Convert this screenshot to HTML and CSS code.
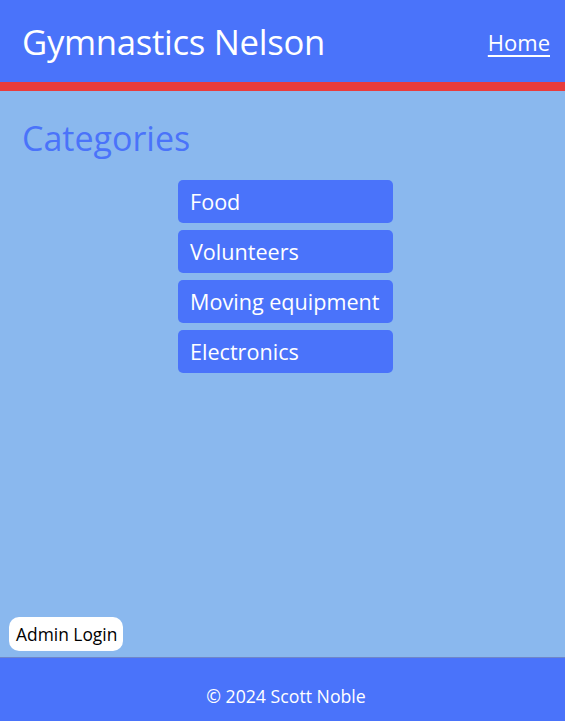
FILE: index.html
```html
<!DOCTYPE html>
<html lang="en">
<head>
<meta charset="utf-8">
<title>Gymnastics Nelson</title>
<link rel="stylesheet" href="styles.css">
</head>
<body>
<header class="site-header">
  <h1 class="site-title">Gymnastics Nelson</h1>
  <nav class="nav"><a href="#" class="nav-link">Home</a></nav>
</header>
<main class="main">
  <h2 class="section-title">Categories</h2>
  <ul class="category-list">
    <li><a href="#" class="category">Food</a></li>
    <li><a href="#" class="category">Volunteers</a></li>
    <li><a href="#" class="category">Moving equipment</a></li>
    <li><a href="#" class="category">Electronics</a></li>
  </ul>
  <div class="admin-row"><a href="#" class="admin-btn">Admin Login</a></div>
</main>
<footer class="site-footer">© 2024 Scott Noble</footer>
</body>
</html>
```
FILE: styles.css
```css
* { box-sizing: border-box; }
html, body { margin: 0; padding: 0; height: 100%; }
body {
  font-family: "Open Sans", "Noto Sans", sans-serif;
  background: #8ab8ee;
  min-height: 100vh;
  display: flex;
  flex-direction: column;
}
.site-header {
  background: #4a73fa;
  border-bottom: 9px solid #e83c3c;
  height: 91px;
  display: flex;
  align-items: center;
  justify-content: space-between;
  padding: 2px 15px 0 22px;
}
.site-title {
  margin: 0;
  color: #fff;
  font-weight: 400;
  font-size: 34.7px;
  letter-spacing: -0.3px;
  line-height: 1;
}
.nav-link {
  color: #fff;
  font-size: 22px;
  text-decoration: underline;
  text-decoration-thickness: 2px;
  text-underline-offset: 4px;
}
.main {
  flex: 1;
  display: flex;
  flex-direction: column;
  padding: 0 0 6px 0;
}
.section-title {
  margin: 24px 0 0 22px;
  color: #4a73fa;
  font-weight: 400;
  font-size: 34px;
  line-height: 46px;
}
.category-list {
  list-style: none;
  margin: 19px 0 0 0;
  padding: 0 0 0 6px;
  display: flex;
  flex-direction: column;
  align-items: center;
  gap: 7px;
}
.category-list li { display: block; }
.category {
  display: flex;
  align-items: center;
  width: 215px;
  height: 43px;
  padding: 0 8px 0 12px;
  background: #4a73fa;
  border-radius: 5px;
  color: #fff;
  font-size: 21.6px;
  white-space: nowrap;
  text-decoration: none;
}
.admin-row { margin: auto 0 0 9px; }
.admin-btn {
  display: inline-flex;
  align-items: center;
  height: 34px;
  padding: 0 6px 0 7px;
  background: #fff;
  color: #000;
  border-radius: 10px;
  font-size: 17.4px;
  text-decoration: none;
}
.site-footer {
  background: #4a73fa;
  border-top: 1px solid #6f86c9;
  height: 64px;
  display: flex;
  align-items: center;
  justify-content: center;
  color: #fff;
  font-size: 17.7px;
  padding: 12px 0 0 7px;
}
```
